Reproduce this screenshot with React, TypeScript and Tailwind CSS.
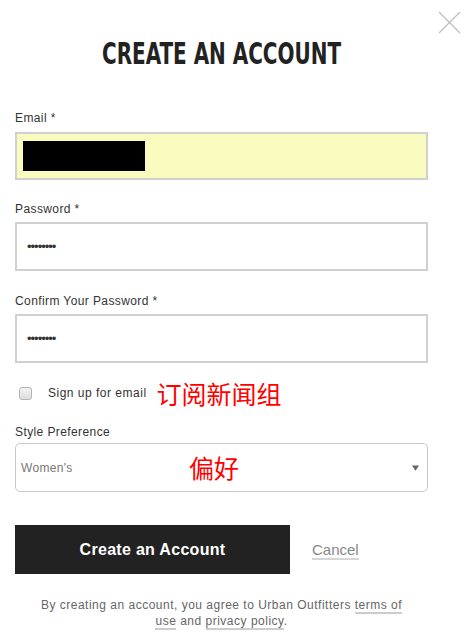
export default function App() {
    return (
        <div className="relative w-[476px] h-[641px] bg-white overflow-hidden text-[#333]" style={{ fontFamily: '"Liberation Sans", Arial, sans-serif' }}>
            {/* Close */}
            <button className="absolute left-[438px] top-[11px] w-[23px] h-[23px]" aria-label="Close">
                <svg viewBox="0 0 23 23" className="w-[23px] h-[23px]" fill="none" stroke="#bdbdbd" strokeWidth="1.2">
                    <path d="M1 1 L22 22 M22 1 L1 22" />
                </svg>
            </button>

            <div className="w-[443px] px-[15px]">
                <h1 className="pt-[36px] text-center text-[30px] leading-[36px] font-bold text-[#222]">
                    <span className="inline-block scale-x-[0.74]" style={{ fontFamily: '"DejaVu Sans Condensed", "DejaVu Sans", sans-serif' }}>
                        CREATE AN ACCOUNT
                    </span>
                </h1>

                <form>
                    {/* Email */}
                    <label className="block mt-[38px] text-[12px] leading-[16px] tracking-[0.4px] text-[#333]">Email *</label>
                    <div className="mt-[6px] h-[48px] border-2 border-[#d0d0d0] bg-[#fafcbf] flex items-center pl-[6px]">
                        <div className="w-[122px] h-[30px] bg-black" />
                    </div>

                    {/* Password */}
                    <label className="block mt-[21px] text-[12px] leading-[16px] tracking-[0.4px] text-[#333]">Password *</label>
                    <div className="mt-[5px] h-[49px] border-2 border-[#d0d0d0] bg-white flex items-center pl-[10px] text-[13px] tracking-[-1px] text-[#333]">
                        ••••••••
                    </div>

                    {/* Confirm */}
                    <label className="block mt-[22px] text-[12px] leading-[16px] tracking-[0.4px] text-[#333]">Confirm Your Password *</label>
                    <div className="mt-[5px] h-[49px] border-2 border-[#d0d0d0] bg-white flex items-center pl-[10px] text-[13px] tracking-[-1px] text-[#333]">
                        ••••••••
                    </div>

                    {/* Email signup */}
                    <div className="mt-[14px] h-[32px] flex items-center">
                        <div className="ml-[4px] w-[13px] h-[13px] rounded-[3px] border border-[#b5b5b5] bg-gradient-to-b from-[#f4f4f4] to-[#dcdcdc]" />
                        <span className="ml-[16px] text-[12px] tracking-[0.5px] text-[#333]">Sign up for email</span>
                        <span className="ml-[10px] text-[25px] leading-[30px] text-[#ff0000]" style={{ fontFamily: '"Noto Sans CJK SC", sans-serif' }}>订阅新闻组</span>
                    </div>

                    {/* Style Preference */}
                    <label className="block mt-[15px] text-[12px] leading-[16px] tracking-[0.4px] text-[#333]">Style Preference</label>
                    <div className="mt-[3px] h-[49px] border border-[#c8c8c8] rounded-[5px] bg-white flex items-center pl-[5px] pr-[8px]">
                        <span className="text-[12px] tracking-[0.3px] text-[#777] w-[168px]">Women's</span>
                        <span className="text-[25px] text-[#ff0000]" style={{ fontFamily: '"Noto Sans CJK SC", sans-serif' }}>偏好</span>
                        <svg viewBox="0 0 8 6" className="ml-auto w-[7px] h-[6px]">
                            <path d="M0 0 H8 L4 6 Z" fill="#666" />
                        </svg>
                    </div>

                    {/* Actions */}
                    <div className="mt-[33px] flex items-center">
                        <button type="button" className="w-[275px] h-[49px] bg-[#222] text-white text-[16px] font-bold tracking-[0.3px]">
                            Create an Account
                        </button>
                        <button type="button" className="ml-[22px] mt-[2px] text-[15px] leading-[17px] text-[#888] border-b-2 border-[#d6d6d6]">
                            Cancel
                        </button>
                    </div>
                </form>

                <p className="mt-[23px] px-[20px] text-center text-[12px] leading-[16px] tracking-[0.5px] text-[#666]">
                    By creating an account, you agree to Urban Outfitters{' '}
                    <span className="border-b-2 border-[#ccc]">terms of</span>{' '}
                    <span className="border-b-2 border-[#ccc]">use</span> and{' '}
                    <span className="border-b-2 border-[#ccc]">privacy policy</span>.
                </p>
            </div>
        </div>
    );
}
